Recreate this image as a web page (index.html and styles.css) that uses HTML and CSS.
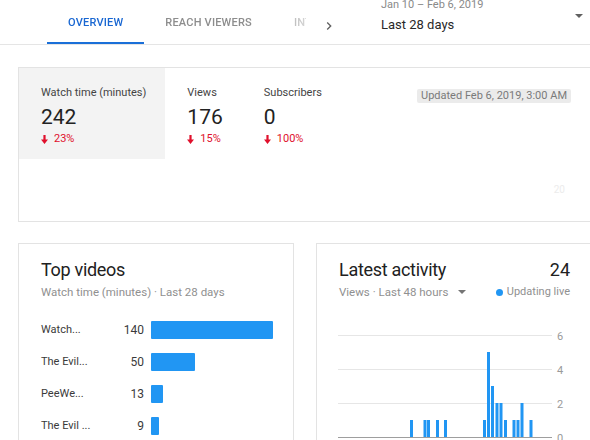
FILE: index.html
```html
<!DOCTYPE html>
<html lang="en">
<head>
<meta charset="utf-8">
<title>Channel analytics</title>
<link rel="stylesheet" href="styles.css">
</head>
<body>
<header class="topbar">
  <nav class="tabs">
    <a class="tab active">OVERVIEW</a>
    <a class="tab">REACH VIEWERS</a>
    <a class="tab">INTEREST VIEWERS</a>
  </nav>
  <svg class="chev" width="16" height="16" viewBox="0 0 24 24"><path d="M10 6L8.59 7.41 13.17 12l-4.58 4.59L10 18l6-6z" fill="#606060"/></svg>
  <div class="date">
    <div class="range">Jan 10 – Feb 6, 2019</div>
    <div class="period">Last 28 days</div>
  </div>
  <svg class="caret" width="8" height="4" viewBox="0 0 8 4"><path d="M0 0h8L4 4z" fill="#606060"/></svg>
</header>

<main class="main">
  <section class="card summary">
    <div class="tiles">
      <div class="tile selected">
        <div class="t-label">Watch time (minutes)</div>
        <div class="t-value">242</div>
        <div class="t-delta"><svg class="down" width="7" height="9" viewBox="0 0 7 9"><path d="M2.4 0h2.2v4.6H7L3.5 9 0 4.6h2.4z" fill="currentColor"/></svg>23%</div>
      </div>
      <div class="tile">
        <div class="t-label">Views</div>
        <div class="t-value">176</div>
        <div class="t-delta"><svg class="down" width="7" height="9" viewBox="0 0 7 9"><path d="M2.4 0h2.2v4.6H7L3.5 9 0 4.6h2.4z" fill="currentColor"/></svg>15%</div>
      </div>
      <div class="tile">
        <div class="t-label">Subscribers</div>
        <div class="t-value">0</div>
        <div class="t-delta"><svg class="down" width="7" height="9" viewBox="0 0 7 9"><path d="M2.4 0h2.2v4.6H7L3.5 9 0 4.6h2.4z" fill="currentColor"/></svg>100%</div>
      </div>
      <div class="updated">Updated Feb 6, 2019, 3:00 AM</div>
    </div>
    <div class="fade-chart"><span class="fade-label">20</span></div>
  </section>

  <div class="row">
    <section class="card panel">
      <div class="p-title">Top videos</div>
      <div class="p-sub">Watch time (minutes) · Last 28 days</div>
      <div class="bars">
        <div class="b-label">Watch...</div><div class="b-num">140</div><div class="b-track"><div class="b-fill" style="width:122px"></div></div>
        <div class="b-label">The Evil...</div><div class="b-num">50</div><div class="b-track"><div class="b-fill" style="width:44px"></div></div>
        <div class="b-label">PeeWe...</div><div class="b-num">13</div><div class="b-track"><div class="b-fill" style="width:12px"></div></div>
        <div class="b-label">The Evil ...</div><div class="b-num">9</div><div class="b-track"><div class="b-fill" style="width:8px"></div></div>
      </div>
    </section>

    <section class="card panel">
      <div class="p-head">
        <div class="p-title">Latest activity</div>
        <div class="p-title num">24</div>
      </div>
      <div class="p-subrow">
        <div class="p-sub">Views · Last 48 hours <svg class="sub-caret" width="8" height="4" viewBox="0 0 8 4"><path d="M0 0h8L4 4z" fill="#757575"/></svg></div>
        <div class="p-sub live"><span class="dot"></span>Updating live</div>
      </div>
      <svg class="activity" width="240" height="120" viewBox="0 0 240 120">
        <g stroke="#e6e6e6" stroke-width="1">
          <line x1="0" y1="10.5" x2="214" y2="10.5"/>
          <line x1="0" y1="44.5" x2="214" y2="44.5"/>
          <line x1="0" y1="78.5" x2="214" y2="78.5"/>
        </g>
        <g fill="#2196f3">
          <rect x="72" y="95" width="3" height="17"/>
          <rect x="85.5" y="95" width="3" height="17"/>
          <rect x="89" y="95" width="3" height="17"/>
          <rect x="98" y="95" width="3" height="17"/>
          <rect x="106" y="95" width="3" height="17"/>
          <rect x="145" y="95" width="3" height="17"/>
          <rect x="149" y="27" width="3" height="85"/>
          <rect x="153" y="61" width="3" height="51"/>
          <rect x="157.5" y="78" width="3" height="34"/>
          <rect x="161.5" y="78" width="3" height="34"/>
          <rect x="166" y="95" width="3" height="17"/>
          <rect x="174.5" y="95" width="3" height="17"/>
          <rect x="178.5" y="95" width="3" height="17"/>
          <rect x="182.5" y="78" width="3" height="34"/>
          <rect x="191.5" y="95" width="3" height="17"/>
        </g>
        <line x1="0" y1="112.5" x2="214" y2="112.5" stroke="#9e9e9e" stroke-width="1"/>
        <g class="axis">
          <text x="219" y="14.5">6</text>
          <text x="219" y="48.5">4</text>
          <text x="219" y="82.5">2</text>
          <text x="219" y="116.5">0</text>
        </g>
      </svg>
    </section>
  </div>
</main>
</body>
</html>
```

FILE: styles.css
```css
html, body {
  margin: 0;
  padding: 0;
  overflow: hidden;
  background: #fff;
}

body {
  font-family: Roboto, "Noto Sans", "Liberation Sans", sans-serif;
  color: #282828;
  width: 590px;
  height: 440px;
}

.topbar {
  display: flex;
  align-items: flex-start;
  height: 44px;
  border-bottom: 1px solid #e5e5e5;
}

.tabs {
  display: flex;
  margin-left: 47px;
  width: 259px;
  overflow: hidden;
  flex-shrink: 0;
  -webkit-mask-image: linear-gradient(to right, #000 86%, rgba(0,0,0,0.35));
  mask-image: linear-gradient(to right, #000 86%, rgba(0,0,0,0.35));
}

.tab {
  flex-shrink: 0;
  box-sizing: border-box;
  height: 44px;
  padding: 4px 21px 0;
  line-height: 38px;
  font-size: 11px;
  font-weight: 500;
  letter-spacing: 0.2px;
  color: #8d8d8d;
  white-space: nowrap;
  border-bottom: 2px solid transparent;
}

.tab.active {
  color: #1967d2;
  border-bottom-color: #1a6fd8;
}

.chev {
  margin: 18px 0 0 15px;
  flex-shrink: 0;
}

.date {
  flex: 1;
  margin: -2px 0 0 44px;
}

.range {
  font-size: 11px;
  line-height: 14px;
  color: #8a8a8a;
}

.period {
  margin-top: 4px;
  font-size: 13px;
  line-height: 18px;
  color: #282828;
}

.caret {
  margin: 14px 7px 0 0;
  flex-shrink: 0;
}

.main {
  width: 574px;
  padding: 22px 0 0 18px;
}

.card {
  border: 1px solid #e3e3e3;
  background: #fff;
  box-sizing: border-box;
}

.tiles {
  display: flex;
  align-items: flex-start;
}

.tile {
  padding: 17px 19px 12px 22px;
}

.tile.selected {
  background: #f3f3f3;
}

.t-label {
  font-size: 11px;
  line-height: 16px;
  color: #444;
}

.t-value {
  margin-top: 2px;
  font-size: 21px;
  line-height: 28px;
  color: #222;
}

.t-delta {
  display: flex;
  align-items: center;
  gap: 6px;
  font-size: 11px;
  line-height: 16px;
  color: #e0102c;
}

.down {
  color: #e0102c;
}

.updated {
  margin: 21px 20px 0 auto;
  padding: 0 4px;
  background: #ebebeb;
  border-radius: 2px;
  font-size: 11px;
  line-height: 14px;
  color: #7a7a7a;
  white-space: nowrap;
}

.fade-chart {
  height: 62px;
  box-sizing: border-box;
  padding: 19px 26px 0 0;
  text-align: right;
}

.fade-label {
  font-size: 10px;
  line-height: 12px;
  color: #ececec;
}

.row {
  display: flex;
  gap: 22px;
  margin-top: 21px;
}

.panel {
  width: 276px;
  height: 260px;
  flex-shrink: 0;
  padding: 14px 21px 0 22px;
}

.p-head {
  display: flex;
  justify-content: space-between;
}

.p-title {
  font-size: 18px;
  line-height: 24px;
  letter-spacing: -0.3px;
  color: #212121;
}

.p-title.num {
  letter-spacing: 0;
}

.p-sub {
  margin-top: 2px;
  font-size: 11.5px;
  line-height: 16px;
  color: #909090;
  white-space: nowrap;
}

.p-subrow {
  display: flex;
  justify-content: space-between;
}

.sub-caret {
  margin-left: 7px;
  vertical-align: middle;
  position: relative;
  top: -1px;
}

.p-sub.live {
  display: flex;
  align-items: center;
  font-size: 11px;
}

.dot {
  width: 7px;
  height: 7px;
  border-radius: 50%;
  background: #2196f3;
  margin-right: 4px;
}

.bars {
  display: grid;
  grid-template-columns: 73px 23px 1fr;
  column-gap: 7px;
  row-gap: 14px;
  margin-top: 21px;
}

.b-label, .b-num {
  font-size: 12px;
  line-height: 18px;
  color: #3a3a3a;
  white-space: nowrap;
}

.b-label {
  font-size: 11px;
}

.b-num {
  text-align: right;
}

.b-fill {
  height: 18px;
  background: #2196f3;
  border-radius: 1px;
}

.activity {
  display: block;
  margin: 25px 0 0 -1px;
}

.axis text {
  font-family: Roboto, "Noto Sans", sans-serif;
  font-size: 11px;
  fill: #9a9a9a;
}
```
